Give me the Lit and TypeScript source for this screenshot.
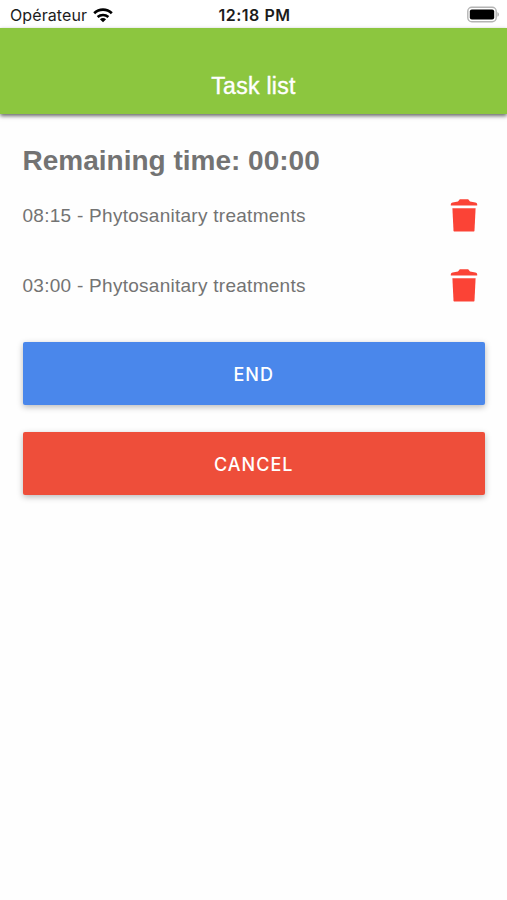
import { LitElement, html, css } from "lit";
import { customElement, state } from "lit/decorators.js";

interface Task {
  time: string;
  label: string;
}

@customElement("status-bar")
class StatusBar extends LitElement {
  static styles = css`
    :host {
      display: grid;
      grid-template-columns: 1fr auto 1fr;
      align-items: center;
      height: 28px;
      box-sizing: border-box;
      padding: 2px 8px 0 10px;
      background: #fff;
      color: #1c1c1c;
      font-family: Inter, sans-serif;
      font-size: 16px;
      line-height: 24px;
    }
    .carrier {
      display: flex;
      align-items: center;
      gap: 6px;
    }
    .name {
      letter-spacing: 0.1px;
    }
    .clock {
      font-weight: 600;
      letter-spacing: 0.5px;
    }
    .battery {
      justify-self: end;
      margin-top: -2px;
    }
    svg {
      display: block;
    }
  `;

  render() {
    return html`
      <div class="carrier">
        <span class="name">Opérateur</span>
        <svg width="20" height="15" viewBox="0 0 20 15" fill="none" stroke="#000">
          <path d="M1.2 5.3C6.2 0.5 13.8 0.5 18.8 5.3" stroke-width="2.7" />
          <path d="M4.6 9C7.7 6.2 12.3 6.2 15.4 9" stroke-width="2.5" />
          <path d="M10 14.2L6.9 11.2Q10 8.8 13.1 11.2Z" fill="#000" stroke="none" />
        </svg>
      </div>
      <span class="clock">12:18 PM</span>
      <svg class="battery" width="33" height="17" viewBox="0 0 33 17">
        <rect x="1.8" y="1.2" width="28.4" height="14.6" rx="4" fill="#fff" stroke="#b4b4b4" stroke-width="1.4" />
        <rect x="3.8" y="3.4" width="24.4" height="10.2" rx="2" fill="#000" />
        <path d="M31.4 6Q33 6.6 33 8.4T31.4 10.8Z" fill="#b4b4b4" />
      </svg>
    `;
  }
}

@customElement("task-row")
class TaskRow extends LitElement {
  static properties = { time: {}, label: {} };
  declare time: string;
  declare label: string;

  static styles = css`
    :host {
      display: flex;
      align-items: center;
      justify-content: space-between;
      height: 70px;
      padding-right: 7px;
    }
    .text {
      padding-top: 2px;
      font-size: 19px;
      letter-spacing: 0.27px;
      line-height: 24px;
      white-space: nowrap;
    }
    svg {
      display: block;
    }
  `;

  render() {
    return html`
      <span class="text">${this.time} - ${this.label}</span>
      <svg width="28" height="34" viewBox="0 0 28 34" fill="#fb4336">
        <path d="M0.8 7.6V6.2Q1 4.9 2.6 4.5L8 3.6L9.8 1.2H18.2L20 3.6L25.4 4.5Q27 4.9 27.2 6.2V7.6Z" />
        <path d="M2.4 10.2H25.6L24.5 32.4Q24.4 33.6 23.2 33.6H4.8Q3.6 33.6 3.5 32.4Z" />
      </svg>
    `;
  }
}

@customElement("app-root")
export class AppRoot extends LitElement {
  @state() private tasks: Task[] = [
    { time: "08:15", label: "Phytosanitary treatments" },
    { time: "03:00", label: "Phytosanitary treatments" },
  ];

  static styles = css`
    :host {
      display: flex;
      flex-direction: column;
      min-height: 900px;
      background: #fefefe;
      color: #737373;
      font-family: "Liberation Sans", Arial, sans-serif;
    }
    .toolbar {
      display: flex;
      justify-content: center;
      align-items: flex-end;
      height: 86px;
      box-sizing: border-box;
      padding-bottom: 14px;
      background: #8cc63f;
      color: #fff;
      box-shadow: 0 2px 4px rgba(0, 0, 0, 0.6);
    }
    .title {
      font-size: 23px;
      line-height: 28px;
      letter-spacing: 0.3px;
      -webkit-text-stroke: 0.4px #fff;
    }
    main {
      display: flex;
      flex-direction: column;
      padding: 31px 22px 0 22.5px;
    }
    h1 {
      margin: 0;
      font-size: 28px;
      line-height: 32px;
      font-weight: 700;
    }
    .tasks {
      display: flex;
      flex-direction: column;
      margin-top: 3px;
    }
    .actions {
      display: flex;
      flex-direction: column;
      gap: 27px;
      margin-top: 22px;
    }
    button {
      height: 63px;
      border: 0;
      border-radius: 2px;
      padding: 2px 0 0;
      color: #fff;
      font: 500 18px/24px Inter, sans-serif;
      letter-spacing: 1px;
      box-shadow: 0 2px 6px rgba(0, 0, 0, 0.28);
    }
    .end {
      background: #4a87eb;
    }
    .cancel {
      background: #ee4e3a;
    }
  `;

  render() {
    return html`
      <status-bar></status-bar>
      <header class="toolbar"><span class="title">Task list</span></header>
      <main>
        <h1>Remaining time: 00:00</h1>
        <div class="tasks">
          ${this.tasks.map((t) => html`<task-row .time=${t.time} .label=${t.label}></task-row>`)}
        </div>
        <div class="actions">
          <button class="end">END</button>
          <button class="cancel">CANCEL</button>
        </div>
      </main>
    `;
  }
}
